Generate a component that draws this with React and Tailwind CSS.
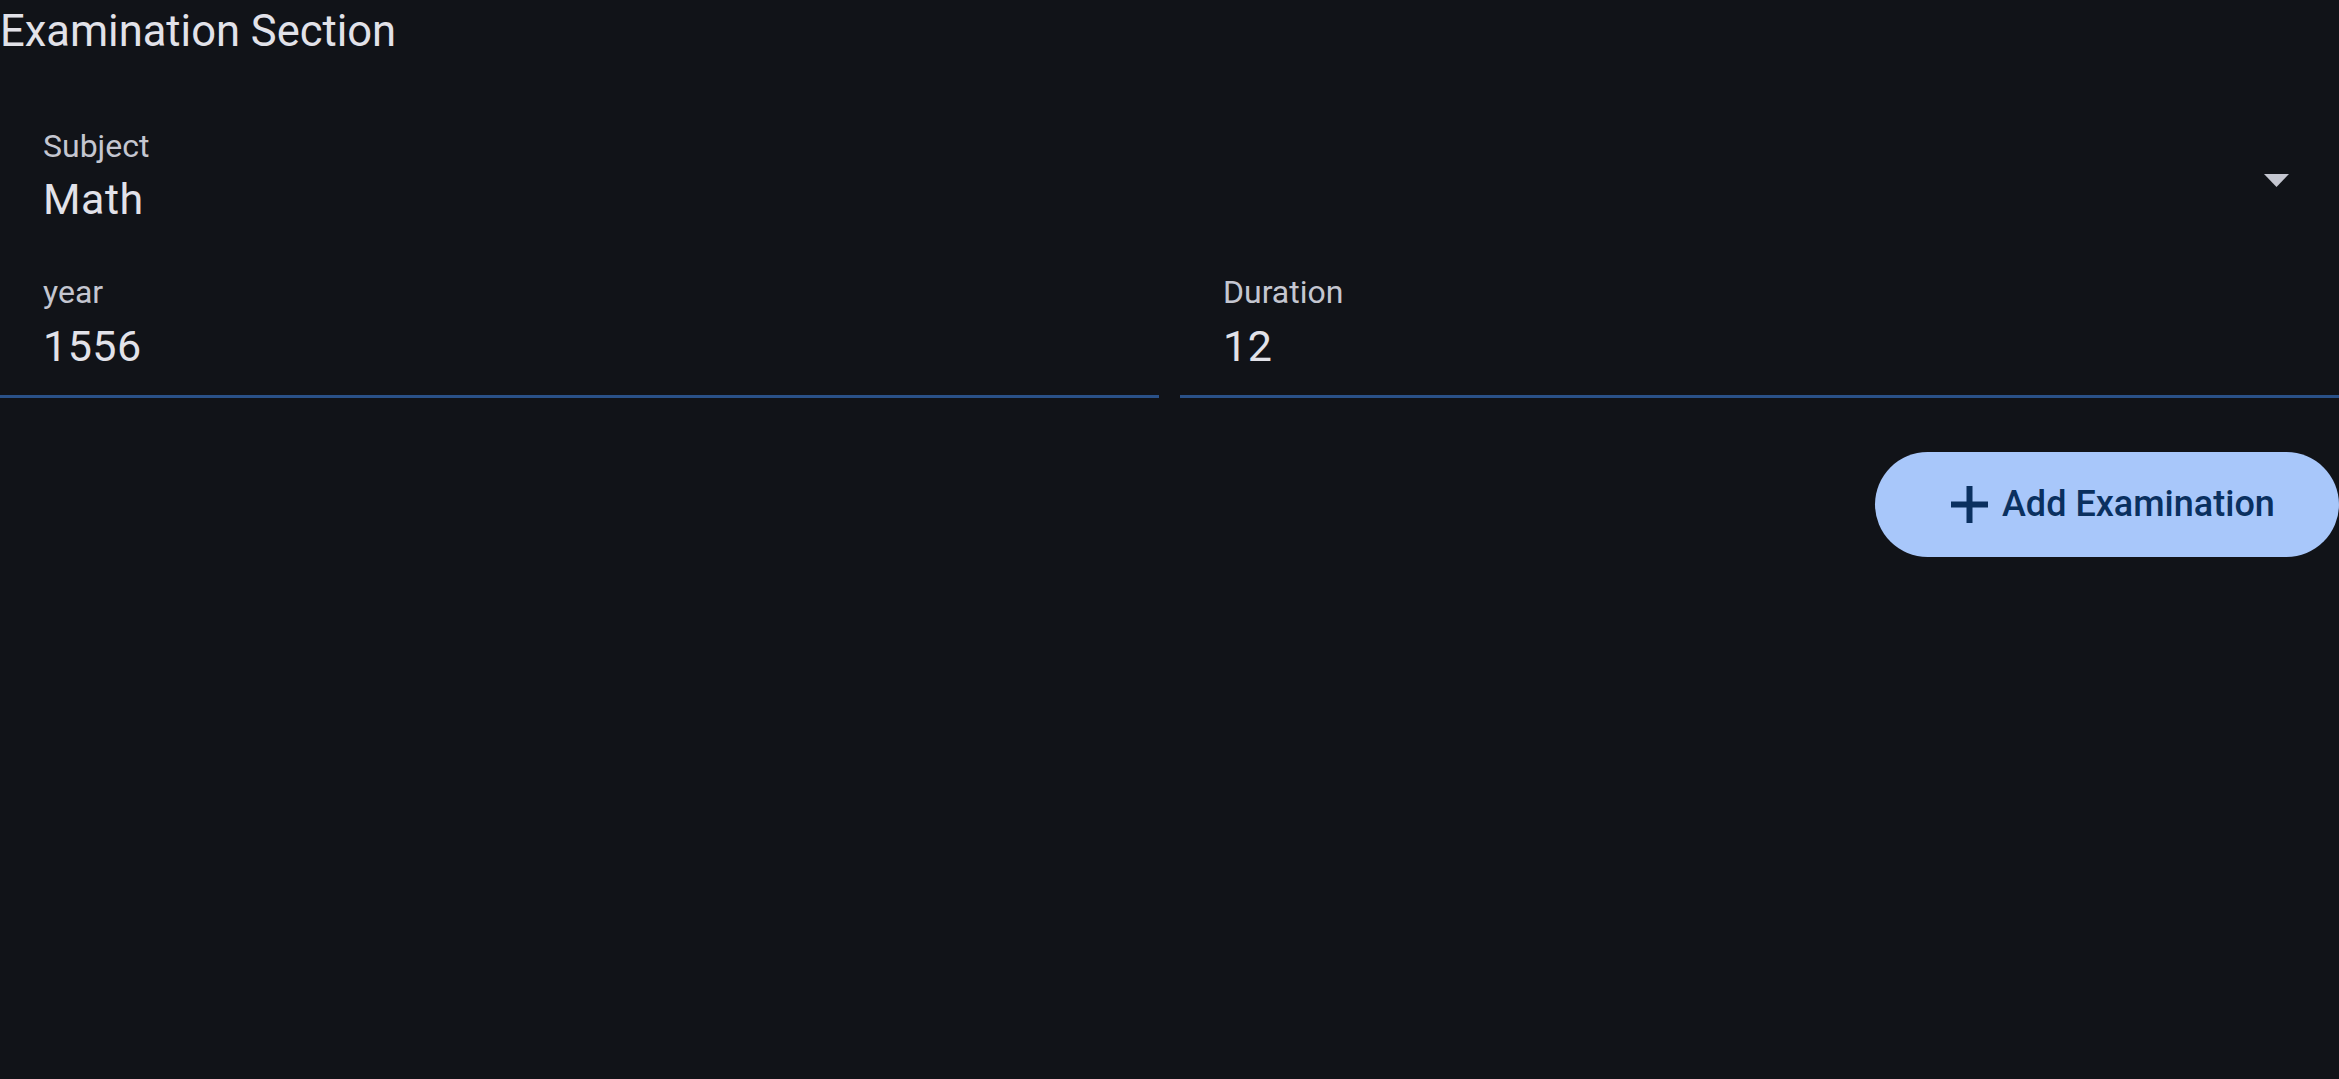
import React from 'react';

function Field({ label, value, className = '' }) {
  return (
    <div className={`pt-[25px] pb-[27px] pl-[43px] border-b-[3px] border-[#2a5188] ${className}`}>
      <div className="text-[32px] leading-[32px] text-[#c4c6d0]">{label}</div>
      <div className="mt-[17px] text-[43px] leading-[43px] tracking-[0.5px] text-[#e2e2e9]">{value}</div>
    </div>
  );
}

export default function App() {
  return (
    <div
      className="min-h-screen w-full bg-[#111318] text-[#e2e2e9]"
      style={{ fontFamily: 'Roboto, "Noto Sans", sans-serif' }}
    >
      <h1 className="pt-[10px] text-[43.5px] leading-[44px] font-normal">Examination Section</h1>

      {/* subject select */}
      <div className="mt-[52px] flex items-start pt-[24px] pb-[30px] pl-[43px] pr-[50px]">
        <div className="flex-1">
          <div className="text-[32px] leading-[32px] text-[#c4c6d0]">Subject</div>
          <div className="mt-[16px] text-[43px] leading-[43px] tracking-[0.5px] text-[#e2e2e9]">Math</div>
        </div>
        <svg width="25" height="13" viewBox="0 0 25 13" className="mt-[44px]">
          <path d="M0 0 L25 0 L12.5 13 Z" fill="#c4c6d0" />
        </svg>
      </div>

      <div className="grid grid-cols-2 gap-[21px]">
        <Field label="year" value="1556" />
        <Field label="Duration" value="12" />
      </div>

      <div className="mt-[54px] flex justify-end">
        <button className="flex h-[105px] w-[464px] items-center gap-[14px] rounded-full bg-[#a8c7fa] pl-[76px] text-[36px] font-medium text-[#0a305f]">
          <svg width="37" height="37" viewBox="0 0 37 37">
            <rect x="15.5" y="0" width="6" height="37" fill="#0a305f" />
            <rect x="0" y="15.5" width="37" height="6" fill="#0a305f" />
          </svg>
          <span className="leading-[37px]">Add Examination</span>
        </button>
      </div>
    </div>
  );
}
